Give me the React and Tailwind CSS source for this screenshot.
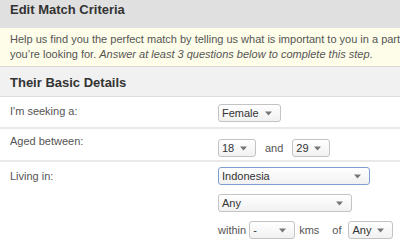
import React from "react";

function Select({ value, width, focus }) {
  return (
    <div
      className={`flex h-[18px] shrink-0 items-center justify-between rounded-[3px] border bg-gradient-to-b from-white to-[#f1f1f1] pl-[3px] pr-[8px] text-[11px] text-[#333] ${
        focus ? "border-[#7f9fd3]" : "border-[#c3c3c3]"
      } ${width}`}
    >
      <span className="leading-[16px]">{value}</span>
      <svg width="7" height="5" viewBox="0 0 7 5">
        <path d="M0 0.5 L7 0.5 L3.5 4.5 Z" fill="#767676" />
      </svg>
    </div>
  );
}

function App() {
  return (
    <div
      className="h-[245px] w-[400px] overflow-hidden bg-white"
      style={{ fontFamily: '"Liberation Sans", Arial, sans-serif' }}
    >
      {/* Page header */}
      <div className="h-[28px] bg-[#e0e0e0] pl-[10px] pt-[2px] text-[13px] font-bold leading-[16px] text-[#333]">
        Edit Match Criteria
      </div>

      {/* Intro */}
      <div className="h-[39px] whitespace-nowrap border-b border-[#d9d9d9] bg-[#fefde9] pl-[10px] pt-[4px] text-[11px] leading-[15px] text-[#555]">
        <p>Help us find you the perfect match by telling us what is important to you in a particular</p>
        <p>
          you’re looking for. <i>Answer at least 3 questions below to complete this step</i>.
        </p>
      </div>

      {/* Section header */}
      <div className="h-[30px] border-b border-[#dedede] bg-[#f1f1f1] pl-[10px] pt-[8px] text-[13px] font-bold leading-[16px] text-[#333]">
        Their Basic Details
      </div>

      {/* Rows */}
      <div className="flex h-[32px] border-b-2 border-[#e9e9e9] pt-[7px]">
        <div className="w-[218px] shrink-0 pl-[10px] -mt-[1px] text-[11px] leading-[16px] text-[#555]">I'm seeking a:</div>
        <Select value="Female" width="w-[63px]" />
      </div>

      <div className="flex h-[33px] border-b-2 border-[#e9e9e9] pt-[7px]">
        <div className="w-[218px] shrink-0 pl-[10px] -mt-[3px] text-[11px] leading-[16px] text-[#555]">Aged between:</div>
        <div className="flex items-center text-[11px] text-[#555]">
          <Select value="18" width="w-[38px]" />
          <span className="mx-[9px] leading-[16px]">and</span>
          <Select value="29" width="w-[38px]" />
        </div>
      </div>

      <div className="flex pt-[5px]">
        <div className="w-[218px] shrink-0 pl-[10px] pt-[1px] text-[11px] leading-[16px] text-[#555]">Living in:</div>
        <div className="flex flex-col gap-[9px]">
          <Select value="Indonesia" width="w-[152px]" focus />
          <Select value="Any" width="w-[134px]" />
          <div className="flex items-center text-[11px] text-[#555]">
            <span className="mr-[3px] leading-[16px]">within</span>
            <Select value="-" width="w-[46px]" />
            <span className="ml-[4px] leading-[16px]">kms</span>
            <span className="ml-[13px] leading-[16px]">of</span>
            <Select value="Any" width="w-[45px] ml-[7px]" />
          </div>
        </div>
      </div>
    </div>
  );
}

export default App;
